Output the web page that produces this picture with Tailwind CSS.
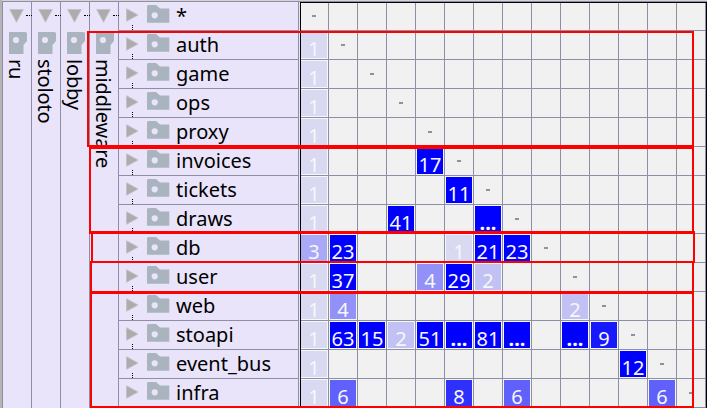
<!DOCTYPE html>
<html lang="en">
<head>
<meta charset="utf-8">
<title>Dependency structure matrix</title>
<script src="https://cdn.jsdelivr.net/npm/@tailwindcss/browser@4"></script>
</head>
<body class="overflow-hidden bg-[#d4d4d4]">
<svg class="hidden">
  <symbol id="folder" viewBox="0 0 24 20"><path fill="#a9b4be" d="M1 2L2 1H10L14 4.5H23.3V18.7H1Z"/><circle cx="8.7" cy="11.3" r="3.1" fill="#e9e4fa"/></symbol>
  <symbol id="tri" viewBox="0 0 13 14"><path fill="#acacac" stroke="#c4c2c6" stroke-width="1" d="M.5 .7V13.3L12 7Z"/></symbol>
</svg>
<main class="relative flex h-[408px] w-[707px] overflow-hidden border-l-2 border-[#b4b4b4] pt-px font-['Noto_Sans',sans-serif] text-[20px] text-black">
  <div id="parents" class="flex h-[407px] border-t border-l border-[#8d8fa5]"></div>
  <div id="rows" class="h-[407px] w-[180px] border-t border-r border-[#8d8fa5] bg-[#e9e4fa]"></div>
  <div class="w-px bg-[#e9e4fa] border-t border-[#8d8fa5]"></div>
  <div class="h-[407px] border-t border-[#8d8fa5]"><div id="matrix" class="relative grid w-[407px] grid-cols-[repeat(14,29px)] border-r border-black bg-[#f1f1f1]"></div></div>
  <div class="absolute top-[2px] left-[298px] h-[406px] w-[407px] border-t border-l border-black"></div>
  <div class="absolute top-[31px] left-[85px] h-[116px] w-[607px] border-2 border-[#f00]"></div>
  <div class="absolute top-[147px] left-[87px] h-[87px] w-[605px] border-2 border-[#f00]"></div>
  <div class="absolute top-[231px] left-[89px] h-[32px] w-[604px] border-2 border-[#f00]"></div>
  <div class="absolute top-[261px] left-[88px] h-[32px] w-[604px] border-2 border-[#f00]"></div>
  <div class="absolute top-[292px] left-[88px] h-[116px] w-[604px] border-2 border-[#f00]"></div>
</main>
<script>
const names = ['*','auth','game','ops','proxy','invoices','tickets','draws','db','user','web','stoapi','event_bus','infra'];
document.getElementById('parents').innerHTML = ['ru','stoloto','lobby','middleware'].map(n => `
  <div class="relative w-[29px] border-r border-[#8d8fa5] bg-[#e9e4fa]">
    <svg class="absolute top-[7px] left-[6px] h-[14px] w-[15px]" viewBox="0 0 15 14"><path fill="#acacac" stroke="#c4c2c6" d="M.7 .5H14.3L7.5 13.2Z"/></svg>
    <div class="absolute top-[13px] left-[23px] w-[6px] border-t border-dotted border-black"></div>
    <svg class="absolute top-[29px] left-[5px] h-[24px] w-[19px]" viewBox="0 0 19 24"><path fill="#a9b4be" d="M1 1H17.5L19 2V10L15.5 14V23H1Z"/><circle cx="8" cy="9" r="3.1" fill="#e9e4fa"/></svg>
    <div class="absolute top-[57px] left-0 w-[27px] leading-[27px] tracking-[-0.15px] whitespace-nowrap [writing-mode:vertical-rl]">${n}</div>
  </div>`).join('');
document.getElementById('rows').innerHTML = names.map((n, i) => `
  <div class="relative flex h-[29px] items-start border-b border-[#8d8fa5] pl-[7px]">
    <svg class="mt-[6px] h-[14px] w-[13px]"><use href="#tri"/></svg>
    <svg class="mt-[2px] ml-[7px] h-[20px] w-[24px]"><use href="#folder"/></svg>
    <span class="ml-[6px] leading-[27px]">${n}</span>
    ${i < 13 ? '<i class="absolute bottom-0 left-[13px] h-[5px] border-l border-dotted border-black"></i>' : ''}
  </div>`).join('');
const d = {
  5:{4:17}, 6:{5:11}, 7:{3:41,6:'...'}, 8:{0:3,1:23,5:1,6:21,7:23}, 9:{1:37,4:4,5:29,6:2},
  10:{1:4,9:2}, 11:{1:63,2:15,3:2,4:51,5:'...',6:81,7:'...',9:'...',10:9}, 12:{11:12}, 13:{1:6,5:8,7:6,12:6}
};
const tone = {1:'bg-[#d9d9f1]',2:'bg-[#c1c1f4]',3:'bg-[#a9a9f6]',4:'bg-[#9191f8]',6:'bg-[#6060fb]',8:'bg-[#3030fd]',9:'bg-[#1818fe]'};
let cells = '';
for (let r = 0; r < 14; r++) for (let c = 0; c < 14; c++) {
  const v = (d[r] || {})[c] ?? (c === 0 && r ? 1 : undefined);
  let inner = '';
  if (r === c) inner = '<i class="h-[2px] w-[4px] bg-[#8d8fa5]"></i>';
  else if (v !== undefined) inner = `<div class="h-full w-full border border-[#f7f7fb] pt-[6px] text-center leading-[21px] ${v === '...' ? 'font-bold' : ''} text-[#f7f7fb] ${tone[v] || 'bg-[#00f]'}">${v}</div>`;
  cells += `<div class="flex h-[29px] items-center justify-center border-r border-b border-[#8d8fa5]">${inner}</div>`;
}
document.getElementById('matrix').innerHTML = cells;
</script>
</body>
</html>
